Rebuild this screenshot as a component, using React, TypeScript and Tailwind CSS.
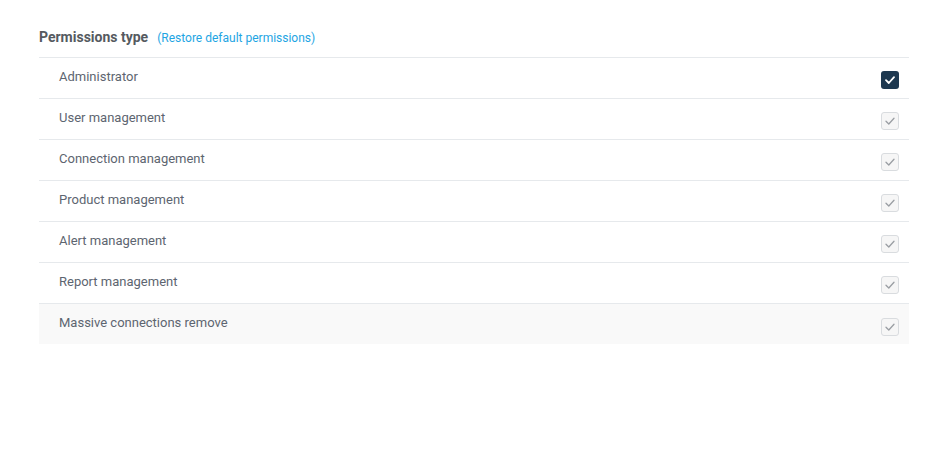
import React from 'react'

const permissions = [
  'Administrator',
  'User management',
  'Connection management',
  'Product management',
  'Alert management',
  'Report management',
  'Massive connections remove',
]

const Check = ({ active }: { active: boolean }) => (
  <span
    className={
      active
        ? 'flex h-[18px] w-[18px] items-center justify-center rounded-[3px] bg-[#1d3850]'
        : 'flex h-[18px] w-[18px] items-center justify-center rounded-[3px] border border-[#d9dcdf] bg-[#f6f6f6]'
    }
  >
    <svg width="10" height="8" viewBox="0 0 10 8" fill="none">
      <path
        d="M1 4.2L3.8 7L9 1.2"
        stroke={active ? '#ffffff' : '#9a9ea3'}
        strokeWidth={active ? 1.8 : 1.3}
        strokeLinecap="round"
        strokeLinejoin="round"
      />
    </svg>
  </span>
)

export default function App() {
  return (
    <div className="min-h-[460px] w-full bg-white pl-[39px] pr-[30px] pt-[27px] font-['Roboto',sans-serif]">
      <div className="flex items-baseline gap-[9px] pb-[9px] leading-[20px]">
        <h2 className="text-[14px] font-bold text-[#555a60]">Permissions type</h2>
        <button className="text-[12px] text-[#1ea5e3]">(Restore default permissions)</button>
      </div>
      <div className="border-t border-[#e6e9ec]">
        {permissions.map((p, i) => {
          const last = i === permissions.length - 1
          return (
            <div
              key={p}
              className={
                last
                  ? 'flex h-[40px] items-center justify-between bg-[#f9f9f9] pl-5 pr-[10px]'
                  : 'flex h-[41px] items-center justify-between border-b border-[#e6e9ec] pl-5 pr-[10px]'
              }
            >
              <span className="-mt-[2px] text-[13px] text-[#5d6570]">{p}</span>
              <span className={last ? 'mt-[5px]' : 'mt-[3px]'}>
                <Check active={i === 0} />
              </span>
            </div>
          )
        })}
      </div>
    </div>
  )
}
